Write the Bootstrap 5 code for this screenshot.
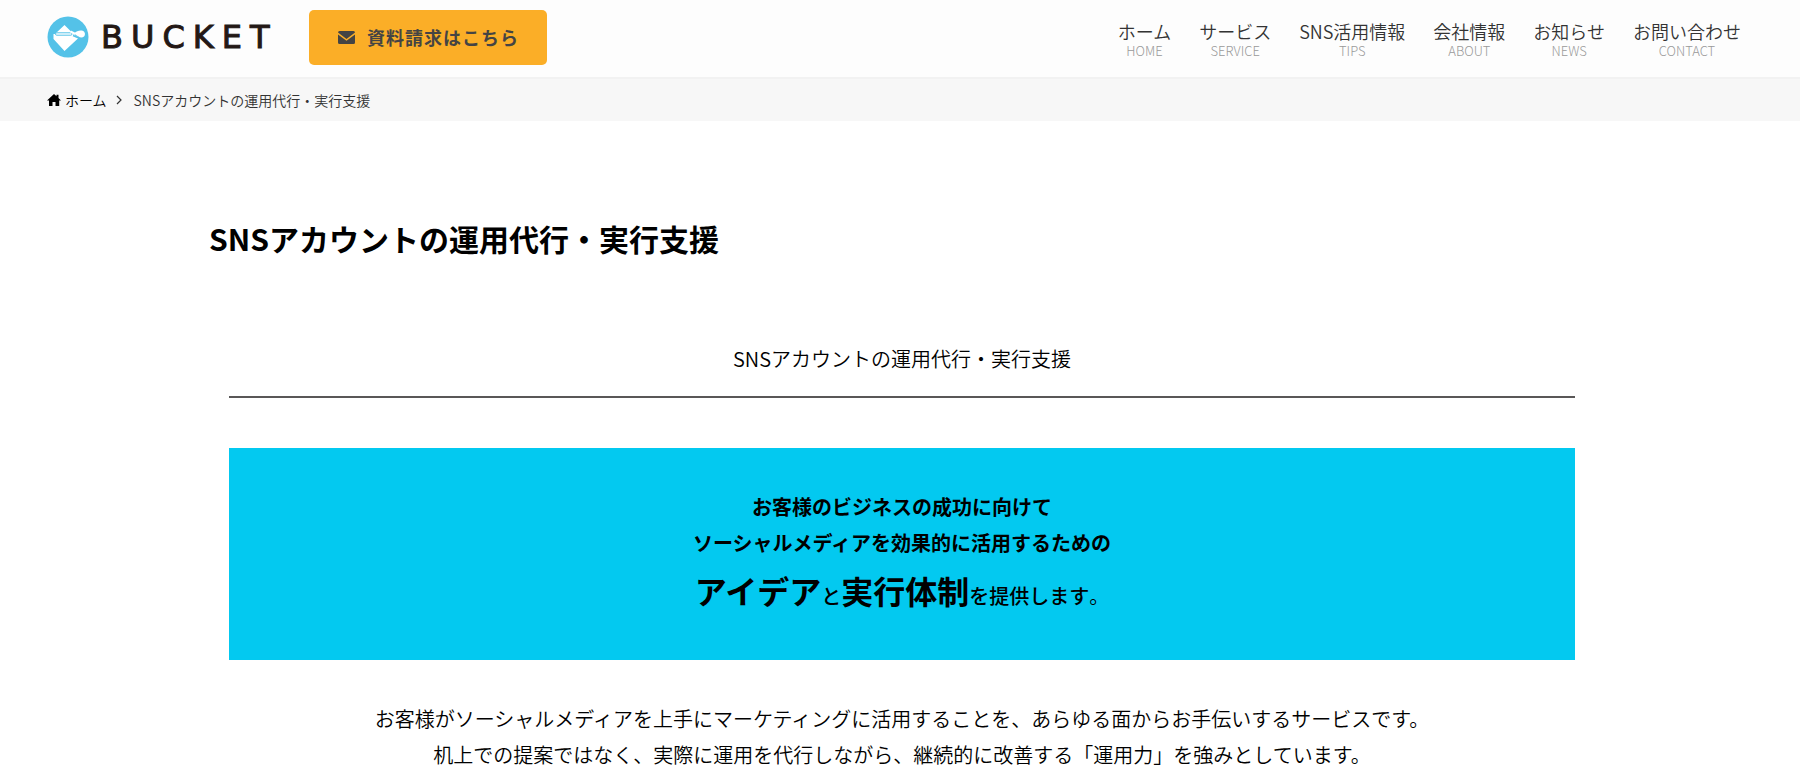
<!DOCTYPE html>
<html lang="ja">
<head>
<meta charset="utf-8">
<meta name="viewport" content="width=device-width, initial-scale=1">
<title>SNSアカウントの運用代行・実行支援 | BUCKET</title>
<link href="https://cdn.jsdelivr.net/npm/bootstrap@5.3.0/dist/css/bootstrap.min.css" rel="stylesheet">
<style>
  body { font-family: "Noto Sans CJK JP", sans-serif; font-weight: 350; color: #000; background: #fff; line-height: 36px; font-size: 20px; }
  a { color: inherit; text-decoration: none; }
  .site-header { background: #fdfdfd; border-bottom: 2px solid #f2f2f2; min-height: 79px; padding-bottom: 3px; }
  .edge { padding-left: 47px; padding-right: 59px; }
  .wordmark { font-family: "DejaVu Sans", sans-serif; font-weight: 400; font-size: 32px; line-height: 40px; letter-spacing: 8px; color: #231815; -webkit-text-stroke: 1px #231815; }
  .btn-request { --bs-btn-bg: #fbae27; --bs-btn-hover-bg: #f0a219; --bs-btn-color: #444; --bs-btn-border-radius: 5px; --bs-btn-border-width: 0; width: 238px; height: 55px; margin-left: 32px; font-size: 18px; font-weight: 700; letter-spacing: 1px; }
  .gnav { gap: 28px; padding-top: 4px; }
  .gnav a { padding: 0; font-size: 18px; line-height: 24px; color: #333; }
  .gnav small { font-size: 13px; line-height: 16px; color: #999; font-weight: 300; }
  .crumbs { background: #f7f7f7; font-size: 14px; line-height: 22px; padding-top: 10px; padding-bottom: 10px; }
  .crumbs .current { color: #333; }
  .article { max-width: 1386px; padding-top: 95px; }
  .article h1 { font-size: 30px; line-height: 45px; font-weight: 700; }
  .article-body { margin: 80px 20px 0; }
  .section-title { font-size: 20px; line-height: 36px; font-weight: 350; padding-bottom: 19px; border-bottom: 2px solid #595757; margin-bottom: 50px; }
  .hero-box { background: #03c9f0; padding: 41px 16px; font-weight: 500; margin-bottom: 41px; }
  .hero-box .big { font-size: 32px; line-height: 58px; font-weight: 700; }
  .hero-box .stop { font-weight: 350; }
</style>
</head>
<body>
<header class="site-header edge d-flex align-items-center justify-content-between flex-wrap">
  <div class="d-flex align-items-center">
    <a href="#" class="d-flex align-items-center" aria-label="BUCKET">
      <svg width="42" height="42" viewBox="0 0 42 42" aria-hidden="true">
        <circle cx="21" cy="21" r="20.5" fill="#54c2e8"/>
        <path fill="#fff" d="M6.500 18 H8 L17.500 9 L24 15.500 L27 19 L32 21.500 L17.500 35 L6.500 23 Z"/>
        <rect x="8.500" y="16.800" width="16.500" height="2.400" rx="1.200" fill="#fff" stroke="#54c2e8"/>
        <path d="M23.500 15.500 L28.500 18" stroke="#fff" stroke-width="2"/>
        <path d="M26 19.500 L33 22.500" stroke="#54c2e8" stroke-width="1.500"/>
        <path fill="#fff" d="M27.500 17.500 C29 15 32 14.300 34.500 14.500 C38 15 38.800 18.500 37 20.500 C34.500 22.500 31 21 27.500 17.500 Z"/>
      </svg>
      <span class="wordmark ms-2 ps-1">BUCKET</span>
    </a>
    <button type="button" class="btn btn-request d-flex align-items-center justify-content-center gap-2">
      <svg width="17" height="13" viewBox="0 0 17 13" class="me-1" aria-hidden="true">
        <path fill="#444" d="M1.500 0h14A1.500 1.500 0 0 1 17 1.500L8.500 8 0 1.500A1.500 1.500 0 0 1 1.500 0zM0 3.500l8.500 6.300L17 3.500v8a1.500 1.500 0 0 1-1.500 1.500h-14A1.500 1.500 0 0 1 0 11.500z"/>
      </svg>
      <span>資料請求はこちら</span>
    </button>
  </div>
  <nav class="nav gnav text-center" aria-label="メイン">
    <a class="d-flex flex-column" href="#">ホーム<small>HOME</small></a>
    <a class="d-flex flex-column" href="#">サービス<small>SERVICE</small></a>
    <a class="d-flex flex-column" href="#">SNS活用情報<small>TIPS</small></a>
    <a class="d-flex flex-column" href="#">会社情報<small>ABOUT</small></a>
    <a class="d-flex flex-column" href="#">お知らせ<small>NEWS</small></a>
    <a class="d-flex flex-column" href="#">お問い合わせ<small>CONTACT</small></a>
  </nav>
</header>
<nav class="crumbs edge d-flex align-items-center" aria-label="パンくず">
  <a href="#" class="d-flex align-items-center">
    <svg width="14" height="12" viewBox="0 0 14 12" class="me-1" aria-hidden="true">
      <path d="M7 0 L9.500 2.200 V0.700 H11.500 V4 L14 6.500 H12.200 V12 H8.500 V8 H5.500 V12 H2 V6.500 H0 Z"/>
    </svg>
    ホーム
  </a>
  <svg width="7" height="10" viewBox="0 0 7 10" class="mx-2" aria-hidden="true"><path d="M2 1 L6 5 L2 9" fill="none" stroke="#333" stroke-width="1.200"/></svg>
  <span class="current ms-1">SNSアカウントの運用代行・実行支援</span>
</nav>
<main class="ps-1">
  <article class="article mx-auto">
    <h1 class="mb-0">SNSアカウントの運用代行・実行支援</h1>
    <div class="article-body text-center">
      <h2 class="section-title">SNSアカウントの運用代行・実行支援</h2>
      <div class="hero-box">
        <strong>お客様のビジネスの成功に向けて<br>
        ソーシャルメディアを効果的に活用するための</strong><br>
        <span class="big">アイデア</span>と<span class="big">実行体制</span>を提供します<span class="stop">。</span>
      </div>
      <p class="mb-0">お客様がソーシャルメディアを上手にマーケティングに活用することを、あらゆる面からお手伝いするサービスです。<br>
      机上での提案ではなく、実際に運用を代行しながら、継続的に改善する「運用力」を強みとしています。</p>
    </div>
  </article>
</main>
<script src="https://cdn.jsdelivr.net/npm/bootstrap@5.3.0/dist/js/bootstrap.bundle.min.js"></script>
</body>
</html>
